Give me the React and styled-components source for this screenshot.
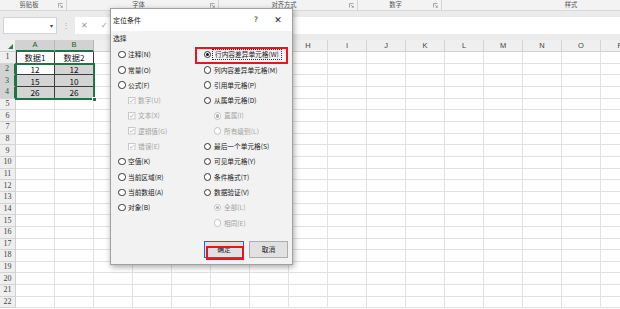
import React from 'react';
import styled, { createGlobalStyle, css } from 'styled-components';

const GlobalStyle = createGlobalStyle`
  html, body { margin: 0; padding: 0; background: #fff; }
  body { font-family: "Noto Sans CJK SC", "Liberation Sans", sans-serif; }
  * { box-sizing: border-box; }
`;

const Window = styled.div`
  position: relative;
  width: 620px;
  height: 309px;
  overflow: hidden;
  display: flex;
  flex-direction: column;
  background: #fff;
`;

/* ---------- Ribbon ---------- */
const Ribbon = styled.div`
  height: 11px;
  flex: none;
  display: flex;
  background: #f3f3f3;
  border-bottom: 1px solid #d8d8d8;
`;

const RibbonGroup = styled.div`
  flex: none;
  width: ${(p) => p.$w}px;
  display: flex;
  align-items: center;
  padding-right: 3px;
  border-right: 1px solid #d4d4d4;
  font-family: "Noto Sans CJK SC", sans-serif;
  font-size: 6.3px;
  color: #555;
`;

const RibbonLabel = styled.div`
  flex: 1;
  text-align: center;
  line-height: 10px;
`;

const Launcher = styled.svg`
  width: 5px;
  height: 5px;
  flex: none;
`;

/* ---------- Formula bar ---------- */
const FormulaBar = styled.div`
  height: 29px;
  flex: none;
  display: flex;
  align-items: center;
  padding: 6px 0 6px 3px;
  background: #ebebeb;
`;

const NameBox = styled.div`
  width: 54px;
  height: 17px;
  background: #fff;
  border: 1px solid #d4d4d4;
  display: flex;
  align-items: center;
  justify-content: flex-end;
  padding-right: 3px;
  color: #444;
  font-size: 6px;
`;

const Grip = styled.div`
  width: 18px;
  display: flex;
  justify-content: center;
  color: #aaa;
  font-size: 8px;
  line-height: 1;
  font-family: "Liberation Sans", sans-serif;
`;

const FormulaBox = styled.div`
  flex: 1;
  height: 17px;
  background: #fff;
  display: flex;
  align-items: center;
  padding-left: 6px;
  gap: 13px;
  color: #9a9a9a;
  font-family: "DejaVu Sans", sans-serif;
  font-size: 8px;
`;

/* ---------- Sheet ---------- */
const ROW_H = 11.67;

const Sheet = styled.div`
  position: relative;
  flex: 1;
  display: grid;
  grid-template-columns: 16px repeat(16, 39px);
  grid-template-rows: 12px repeat(22, ${ROW_H}px);
  overflow: hidden;
`;

const Corner = styled.div`
  background: #efefef;
  border-right: 1px solid #d0d0d0;
  border-bottom: 1px solid #d0d0d0;
  display: flex;
  align-items: flex-end;
  justify-content: flex-end;
  padding: 0 2px 2px 0;
`;

const ColHead = styled.div`
  background: ${(p) => (p.$sel ? '#d2d2d2' : '#efefef')};
  color: ${(p) => (p.$sel ? '#1d5a38' : '#444')};
  border-right: 1px solid ${(p) => (p.$sel ? '#b9b9b9' : '#d4d4d4')};
  border-bottom: ${(p) => (p.$sel ? '2px solid #217346' : '1px solid #d0d0d0')};
  font-family: "Liberation Sans", sans-serif;
  font-size: 7.5px;
  line-height: 1;
  display: flex;
  align-items: center;
  justify-content: center;
  overflow: hidden;
`;

const RowHead = styled.div`
  background: ${(p) => (p.$sel ? '#d2d2d2' : '#efefef')};
  color: ${(p) => (p.$sel ? '#1d5a38' : '#444')};
  border-right: ${(p) => (p.$sel ? '2px solid #217346' : '1px solid #d0d0d0')};
  border-bottom: 1px solid #d4d4d4;
  font-family: "Liberation Serif", serif;
  font-size: 8px;
  line-height: 1;
  display: flex;
  align-items: center;
  justify-content: center;
`;

const Cell = styled.div`
  border-right: 1px solid #e2e2e2;
  border-bottom: 1px solid #e2e2e2;
  background: #fff;
  font-family: "Noto Sans CJK SC", sans-serif;
  font-size: 8.2px;
  color: #111;
  display: flex;
  align-items: center;
  justify-content: center;
  line-height: 1;
  ${(p) =>
    p.$boxed &&
    css`
      border-right: 1px solid #3c3c3c;
      border-bottom: 1px solid #3c3c3c;
    `}
  ${(p) =>
    p.$first &&
    css`
      box-shadow: inset 1px 0 0 #3c3c3c;
    `}
  ${(p) =>
    p.$shade &&
    css`
      background: #d4d4d4;
    `}
`;

const SelectionFrame = styled.div`
  position: absolute;
  left: 15px;
  top: ${12 + ROW_H - 1}px;
  width: 80px;
  height: ${ROW_H * 3 + 2}px;
  border: 2px solid #217346;
  pointer-events: none;
`;

const FillHandle = styled.div`
  position: absolute;
  right: -4px;
  bottom: -4px;
  width: 5px;
  height: 5px;
  background: #217346;
  border: 1px solid #fff;
`;

/* ---------- Dialog ---------- */
const Dialog = styled.div`
  position: absolute;
  left: 110px;
  top: 8px;
  width: 183px;
  height: 257px;
  background: #f2f2f2;
  border: 1px solid #a0a0a0;
  box-shadow: 1px 2px 6px rgba(0, 0, 0, 0.35);
  display: flex;
  flex-direction: column;
  font-family: "Noto Sans CJK SC", sans-serif;
  color: #1a1a1a;
`;

const TitleBar = styled.div`
  height: 22px;
  flex: none;
  display: flex;
  align-items: center;
  padding: 0 3px 0 2px;
  background: #fff;
  font-size: 7px;
  line-height: 1;
`;

const TitleText = styled.div`
  flex: 1;
`;

const TitleBtn = styled.div`
  width: 22px;
  text-align: center;
  font-family: "DejaVu Sans", sans-serif;
  font-size: ${(p) => p.$size}px;
  color: #222;
`;

const Body = styled.div`
  flex: 1;
  display: flex;
  flex-direction: column;
  padding: 0 4px 6px 2px;
`;

const GroupLabel = styled.div`
  height: 15px;
  display: flex;
  align-items: center;
  font-size: 6.8px;
  line-height: 1;
`;

const Columns = styled.div`
  display: flex;
  padding-left: 5px;
  margin-top: 1px;
`;

const Column = styled.div`
  display: flex;
  flex-direction: column;
  width: ${(p) => p.$w}px;
`;

const Option = styled.div`
  position: relative;
  height: 15.3px;
  display: flex;
  align-items: center;
  gap: 2.5px;
  padding-left: ${(p) => (p.$indent ? 10 : 0)}px;
  font-size: 6.7px;
  line-height: 1;
  white-space: nowrap;
  color: ${(p) => (p.$disabled ? '#a3a3a3' : '#1a1a1a')};
`;

const Radio = styled.span`
  width: 7.5px;
  height: 7.5px;
  flex: none;
  border-radius: 50%;
  border: 1px solid ${(p) => (p.$disabled ? '#c2c2c2' : '#333')};
  background: #fff;
  display: flex;
  align-items: center;
  justify-content: center;
  &::after {
    content: '';
    width: 3.5px;
    height: 3.5px;
    border-radius: 50%;
    background: ${(p) => (p.$disabled ? '#b0b0b0' : '#111')};
    display: ${(p) => (p.$checked ? 'block' : 'none')};
  }
`;

const Check = styled.svg`
  width: 7.5px;
  height: 7.5px;
  flex: none;
`;

const FocusText = styled.span`
  outline: 1px dotted #333;
  outline-offset: 1.5px;
  padding: 0 1px;
`;

const RedMark = styled.div`
  position: absolute;
  left: ${(p) => p.$l}px;
  top: ${(p) => p.$t}px;
  width: ${(p) => p.$w}px;
  height: ${(p) => p.$h}px;
  border: 2px solid #e5161d;
  pointer-events: none;
`;

const ButtonRow = styled.div`
  margin-top: auto;
  display: flex;
  justify-content: flex-end;
  gap: 5px;
`;

const Button = styled.div`
  position: relative;
  width: ${(p) => p.$w}px;
  height: 17px;
  background: #e1e1e1;
  border: 1px solid ${(p) => (p.$default ? '#0078d7' : '#adadad')};
  display: flex;
  align-items: center;
  justify-content: center;
  font-size: 6.8px;
  line-height: 1;
  color: #1a1a1a;
`;

const LauncherIcon = () => (
  <Launcher viewBox="0 0 5 5">
    <path d="M0.5 4.5 V0.5 H4.5" fill="none" stroke="#888" strokeWidth="0.7" />
    <path d="M1.8 1.8 L4.3 4.3 M4.3 2.6 V4.3 H2.6" fill="none" stroke="#888" strokeWidth="0.7" />
  </Launcher>
);

const CheckIcon = () => (
  <Check viewBox="0 0 8 8">
    <rect x="0.5" y="0.5" width="7" height="7" fill="#fff" stroke="#c6c6c6" />
    <path d="M1.8 4.1 L3.3 5.6 L6.2 2.4" fill="none" stroke="#a8a8a8" strokeWidth="0.9" />
  </Check>
);

const COLS = 'ABCDEFGHIJKLMNOP'.split('');
const TABLE = {
  1: ['数据1', '数据2'],
  2: ['12', '12'],
  3: ['15', '10'],
  4: ['26', '26'],
};

const LEFT = [
  { t: '注释(N)' },
  { t: '常量(O)' },
  { t: '公式(F)' },
  { t: '数字(U)', cb: true },
  { t: '文本(X)', cb: true },
  { t: '逻辑值(G)', cb: true },
  { t: '错误(E)', cb: true },
  { t: '空值(K)' },
  { t: '当前区域(R)' },
  { t: '当前数组(A)' },
  { t: '对象(B)' },
];

const RIGHT = [
  { t: '行内容差异单元格(W)', checked: true, focus: true, mark: true },
  { t: '列内容差异单元格(M)' },
  { t: '引用单元格(P)' },
  { t: '从属单元格(D)' },
  { t: '直属(I)', indent: true, disabled: true, checked: true },
  { t: '所有级别(L)', indent: true, disabled: true },
  { t: '最后一个单元格(S)' },
  { t: '可见单元格(Y)' },
  { t: '条件格式(T)' },
  { t: '数据验证(V)' },
  { t: '全部(L)', indent: true, disabled: true, checked: true },
  { t: '相同(E)', indent: true, disabled: true },
];

const renderOption = (o) => {
  if (o.cb) {
    return (
      <Option key={o.t} $indent $disabled>
        <CheckIcon />
        <span>{o.t}</span>
      </Option>
    );
  }
  return (
    <Option key={o.t} $indent={o.indent} $disabled={o.disabled}>
      <Radio $checked={o.checked} $disabled={o.disabled} />
      {o.focus ? <FocusText>{o.t}</FocusText> : <span>{o.t}</span>}
      {o.mark && <RedMark $l={-9} $t={-0.5} $w={93} $h={17.5} />}
    </Option>
  );
};

export default function App() {
  const rows = [];
  for (let r = 1; r <= 22; r++) {
    const sel = r >= 2 && r <= 4;
    rows.push(
      <RowHead key={`h${r}`} $sel={sel}>
        {r}
      </RowHead>
    );
    COLS.forEach((c, ci) => {
      const data = TABLE[r];
      const boxed = !!data && ci < 2;
      const shade = sel && ci < 2 && !(r === 2 && ci === 0);
      rows.push(
        <Cell key={`${c}${r}`} $boxed={boxed} $first={boxed && ci === 0} $shade={shade}>
          {boxed ? data[ci] : ''}
        </Cell>
      );
    });
  }

  return (
    <Window>
      <GlobalStyle />
      <Ribbon>
        <RibbonGroup $w={67}>
          <RibbonLabel>剪贴板</RibbonLabel>
          <LauncherIcon />
        </RibbonGroup>
        <RibbonGroup $w={152}>
          <RibbonLabel>字体</RibbonLabel>
          <LauncherIcon />
        </RibbonGroup>
        <RibbonGroup $w={139}>
          <RibbonLabel>对齐方式</RibbonLabel>
          <LauncherIcon />
        </RibbonGroup>
        <RibbonGroup $w={84}>
          <RibbonLabel>数字</RibbonLabel>
          <LauncherIcon />
        </RibbonGroup>
        <RibbonGroup $w={262}>
          <RibbonLabel>样式</RibbonLabel>
        </RibbonGroup>
      </Ribbon>

      <FormulaBar>
        <NameBox>▾</NameBox>
        <Grip>⋮</Grip>
        <FormulaBox>
          <span>✕</span>
          <span>✓</span>
        </FormulaBox>
      </FormulaBar>

      <Sheet>
        <Corner>
          <svg width="5" height="5" viewBox="0 0 5 5">
            <path d="M5 0 V5 H0 Z" fill="#2f7d4f" />
          </svg>
        </Corner>
        {COLS.map((c, i) => (
          <ColHead key={c} $sel={i < 2}>
            {c}
          </ColHead>
        ))}
        {rows}
        <SelectionFrame>
          <FillHandle />
        </SelectionFrame>
      </Sheet>

      <Dialog>
        <TitleBar>
          <TitleText>定位条件</TitleText>
          <TitleBtn $size={7.5}>?</TitleBtn>
          <TitleBtn $size={9}>✕</TitleBtn>
        </TitleBar>
        <Body>
          <GroupLabel>选择</GroupLabel>
          <Columns>
            <Column $w={88}>{LEFT.map(renderOption)}</Column>
            <Column $w={86}>{RIGHT.map(renderOption)}</Column>
          </Columns>
          <ButtonRow>
            <Button $w={40} $default>
              确定
              <RedMark $l={1} $t={3.5} $w={38} $h={14} />
            </Button>
            <Button $w={39}>取消</Button>
          </ButtonRow>
        </Body>
      </Dialog>
    </Window>
  );
}
